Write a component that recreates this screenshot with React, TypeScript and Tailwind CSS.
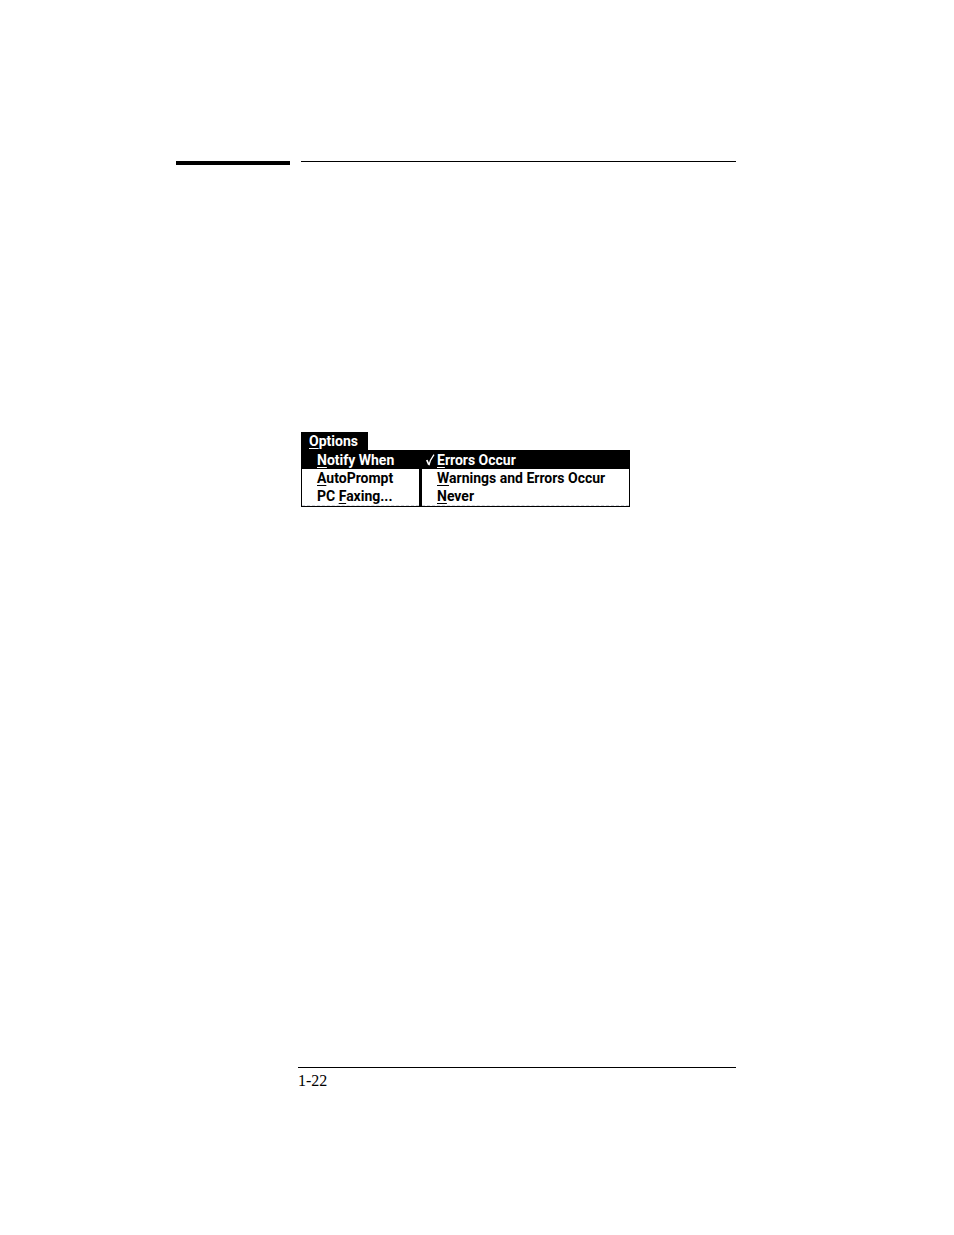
import { useState } from 'react';
import { clsx } from 'clsx';

type Item = { before?: string; hotkey: string; after: string };

const menuItems: Item[] = [
  { hotkey: 'N', after: 'otify When' },
  { hotkey: 'A', after: 'utoPrompt' },
  { before: 'PC ', hotkey: 'F', after: 'axing...' },
];

const notifyItems: Item[] = [
  { hotkey: 'E', after: 'rrors Occur' },
  { hotkey: 'W', after: 'arnings and Errors Occur' },
  { hotkey: 'N', after: 'ever' },
];

function Label({ before, hotkey, after }: Item) {
  return (
    <span className="whitespace-pre">
      {before}
      <span className="underline decoration-1 underline-offset-2 [text-decoration-skip-ink:none]">{hotkey}</span>
      {after}
    </span>
  );
}

function CheckMark() {
  return (
    <svg width="9" height="12" viewBox="0 0 9 12" fill="none" stroke="currentColor" aria-hidden="true">
      <path d="M0.8 6 2.8 10.6" strokeWidth="1.7" />
      <path d="M2.9 11.2 4.4 6.5 8 0.6" strokeWidth="1.3" />
    </svg>
  );
}

export default function App() {
  const [open, setOpen] = useState(0);
  const [checked, setChecked] = useState(0);

  return (
    <div className="flex min-h-screen flex-col bg-white pt-[161px] pr-[218px] pb-[142px] pl-[176px] text-black">
      {/* Page rules */}
      <header className="flex items-start gap-[11px]">
        <div className="h-1 w-[114px] bg-black" />
        <div className="h-px flex-1 bg-black" />
      </header>

      {/* Options menu */}
      <main className="mt-[267px] ml-[125px] flex flex-col items-start font-[Roboto,'Liberation_Sans',sans-serif] text-sm font-bold">
        <button className="h-[18px] bg-black pr-[10px] pl-2 leading-[18px] text-white">
          <Label hotkey="O" after="ptions" />
        </button>
        <div className="flex border border-black">
          <div className="flex w-[117px] flex-col border-b border-dashed border-b-gray-300" role="menu" aria-label="Options">
            {menuItems.map((item, i) => (
              <button
                key={item.after}
                role="menuitem"
                onClick={() => setOpen(i)}
                className={clsx('h-[18px] pl-[15px] text-left leading-[18px]', i === open && 'bg-black text-white')}
              >
                <Label {...item} />
              </button>
            ))}
          </div>
          <div className="w-[3px] bg-black" />
          <div className="flex w-[207px] flex-col border-b border-dashed border-b-gray-300" role="menu" aria-label="Notify When">
            {notifyItems.map((item, i) => (
              <button
                key={item.after}
                role="menuitemradio"
                aria-checked={i === checked}
                onClick={() => setChecked(i)}
                className={clsx('flex h-[18px] items-center pl-1 text-left leading-[18px]', i === 0 && 'bg-black text-white')}
              >
                <span className="w-[11px]">{i === checked && <CheckMark />}</span>
                <Label {...item} />
              </button>
            ))}
          </div>
        </div>
      </main>

      <footer className="mt-auto ml-[122px] border-t border-black pt-px font-['Liberation_Serif','Times_New_Roman',serif] text-base">
        1-22
      </footer>
    </div>
  );
}
